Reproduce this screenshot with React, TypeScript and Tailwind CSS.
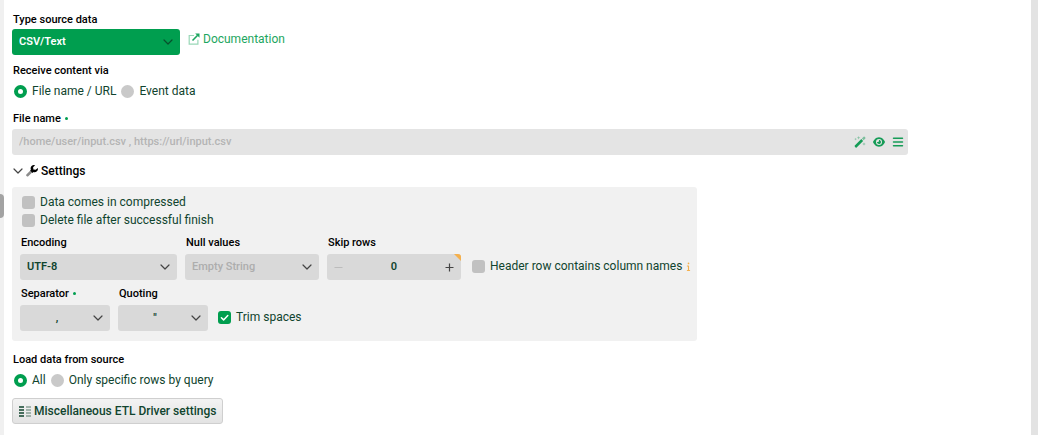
import type { ReactNode } from "react";
import { FaBars, FaEye, FaInfo } from "react-icons/fa6";
import clsx from "clsx";

function Chevron({ className }: { className?: string }) {
  return (
    <svg viewBox="0 0 10 6" className={clsx("pointer-events-none h-[6px] w-[10px]", className)} fill="none" stroke="currentColor" strokeWidth="1.2" strokeLinecap="round" strokeLinejoin="round">
      <path d="M1 1l4 4 4-4" />
    </svg>
  );
}

function Label({ htmlFor, required, children }: { htmlFor: string; required?: boolean; children: ReactNode }) {
  return (
    <label htmlFor={htmlFor} className="flex h-4 items-center pl-px text-[11px] leading-4 font-medium text-black">
      {children}
      {required && <span className="mb-px ml-1 size-[3px] rounded-full bg-[#009e4f]" />}
    </label>
  );
}

function Select({ id, options, className, arrow }: { id: string; options: string[]; className: string; arrow: string }) {
  return (
    <div className="relative">
      <select id={id} className={clsx("block h-[26px] w-full appearance-none rounded-[3px] text-[11px] outline-none", className)}>
        {options.map((option) => (
          <option key={option}>{option}</option>
        ))}
      </select>
      <Chevron className={clsx("absolute top-[10px]", arrow)} />
    </div>
  );
}

function Radio({ name, label, checked }: { name: string; label: string; checked?: boolean }) {
  return (
    <label className="flex items-center gap-[5px] text-[12px] leading-4">
      <input
        type="radio"
        name={name}
        defaultChecked={checked}
        className="size-[13px] appearance-none rounded-full bg-[#c9c9c9] checked:border-4 checked:border-[#009e4f] checked:bg-white"
      />
      {label}
    </label>
  );
}

function Checkbox({ label, checked }: { label: string; checked?: boolean }) {
  return (
    <label className="flex items-center gap-[5px] text-[12px] leading-[18px] whitespace-nowrap">
      <span className="relative flex">
        <input type="checkbox" defaultChecked={checked} className="peer size-[13px] appearance-none rounded-[3px] bg-[#c1c1c1] checked:bg-[#009e4f]" />
        <svg viewBox="0 0 13 13" className="pointer-events-none absolute inset-0 hidden peer-checked:block" fill="none" stroke="white" strokeWidth="1.5" strokeLinecap="round" strokeLinejoin="round">
          <path d="M3.4 6.7l2.2 2.2 4.2-4.4" />
        </svg>
      </span>
      {label}
    </label>
  );
}

function ExternalLinkIcon() {
  return (
    <svg viewBox="0 0 12 12" className="size-3" fill="none" stroke="currentColor">
      <path d="M6 2.5H1.2v8.7h8.7V6.8" strokeWidth="1.2" opacity="0.45" />
      <path d="M4.5 7.5l5.2-5.2" strokeWidth="1.6" />
      <path d="M7.2.5h4.3v4.3z" fill="currentColor" stroke="none" />
    </svg>
  );
}

function WandIcon() {
  return (
    <svg viewBox="0 0 12 12" className="size-3" fill="currentColor">
      <path d="M7.3 3.1l1.8 1.8-6.5 6.5a.7.7 0 0 1-1 0l-.8-.8a.7.7 0 0 1 0-1z" />
      <path d="M7.9 2.5L9.6.8a.7.7 0 0 1 1 0l.7.7a.7.7 0 0 1 0 1L9.7 4.3z" opacity="0.5" />
      <g opacity="0.45">
        <path d="M4.6 0l.5 1.2 1.2.5-1.2.5-.5 1.2-.5-1.2-1.2-.5 1.2-.5z" />
        <path d="M1.6 1.7l.4 1 1 .4-1 .4-.4 1-.4-1-1-.4 1-.4z" />
        <path d="M10 6.2l.5 1.3 1.3.5-1.3.5-.5 1.3-.5-1.3-1.3-.5 1.3-.5z" />
      </g>
    </svg>
  );
}

function WrenchIcon() {
  return (
    <svg viewBox="0 0 12 12" className="size-3">
      <path d="M4.600 5.200L.6 9.200a1.300 1.300 0 0 0 0 1.900 1.300 1.300 0 0 0 1.900 0l4.200-4.100z" fill="#8c8c8c" />
      <path d="M11.800 2.900a3.400 3.400 0 0 1-4.300 4.200l-1 .8-2.300-2.300.7-.9A3.400 3.400 0 0 1 9.100.2L7.100 2.200l.3 2.300 2.300.3z" fill="#000" />
    </svg>
  );
}

function ColumnsIcon() {
  return (
    <svg viewBox="0 0 12 11" className="h-[11px] w-3" fill="none" stroke="currentColor" strokeWidth="1.4">
      <path d="M0 1h5M0 4h5M0 7h5M0 10h5" />
      <path d="M7 1h5M7 4h5M7 7h5M7 10h5" opacity="0.45" />
    </svg>
  );
}

export default function App() {
  return (
    <div className="flex min-h-screen bg-white font-[Roboto,sans-serif] text-[#10442e]">
      <div className="flex w-1 shrink-0 flex-col justify-center bg-[#f0f0f0]">
        <div className="mb-6 h-6 rounded-r-sm bg-[#a3a3a3]" />
      </div>

      <main className="min-w-0 flex-1 px-2 pt-3 pb-[10px]">
        <Label htmlFor="source-type">Type source data</Label>
        <div className="mt-px flex items-start gap-2">
          <div className="w-[168px]">
            <Select id="source-type" options={["CSV/Text", "JSON", "XML"]} className="bg-[#009e4f] pl-[7px] font-semibold text-white" arrow="right-[7px] text-[#07502c]" />
          </div>
          <a href="#documentation" className="flex items-center gap-[3px] pt-[2px] text-[12px] leading-4 text-[#1da660]">
            <ExternalLinkIcon />
            Documentation
          </a>
        </div>

        <fieldset className="mt-2">
          <legend className="h-4 pl-px text-[11px] leading-4 font-medium text-black">Receive content via</legend>
          <div className="mt-1 flex gap-[5px] pl-[2px]">
            <Radio name="receive" label="File name / URL" checked />
            <Radio name="receive" label="Event data" />
          </div>
        </fieldset>

        <div className="mt-3 max-w-4xl">
          <Label htmlFor="file-name" required>File name</Label>
          <div className="mt-[2px] flex h-[26px] items-center gap-[7px] rounded-[3px] bg-[#e4e4e4] pr-1 pl-[7px] text-[#169c57]">
            <input
              id="file-name"
              type="text"
              placeholder="/home/user/input.csv , https://url/input.csv"
              className="min-w-0 flex-1 bg-transparent text-[11px] text-[#10442e] outline-none placeholder:font-medium placeholder:text-[#b4b4b4]"
            />
            <button type="button" aria-label="Build file name"><WandIcon /></button>
            <button type="button" aria-label="Preview"><FaEye className="size-3" /></button>
            <button type="button" aria-label="Choose from list"><FaBars className="size-3" /></button>
          </div>
        </div>

        <button type="button" aria-expanded="true" className="mt-2 flex h-4 items-center gap-[3px] pl-px text-[12px] leading-4 font-medium text-black">
          <Chevron className="text-[#444]" />
          <WrenchIcon />
          Settings
        </button>

        <section className="mt-2 max-w-[685px] rounded-[3px] bg-[#f1f1f1] pt-[6px] pr-1 pb-[10px] pl-2">
          <div className="flex flex-col items-start pl-[2px]">
            <Checkbox label="Data comes in compressed" />
            <Checkbox label="Delete file after successful finish" />
          </div>

          <div className="mt-[6px] flex items-end gap-2">
            <div className="w-[157px] shrink-0">
              <Label htmlFor="encoding">Encoding</Label>
              <div className="mt-[3px]">
                <Select id="encoding" options={["UTF-8", "UTF-16", "ISO-8859-1"]} className="bg-[#d9d9d9] pl-[7px] font-semibold" arrow="right-[7px] text-[#444]" />
              </div>
            </div>
            <div className="w-[134px] shrink-0">
              <Label htmlFor="null-values">Null values</Label>
              <div className="mt-[3px]">
                <Select id="null-values" options={["Empty String", "NULL"]} className="bg-[#d9d9d9] pl-[7px] font-medium text-[#adadad]" arrow="right-[7px] text-[#444]" />
              </div>
            </div>
            <div className="w-[134px] shrink-0">
              <Label htmlFor="skip-rows">Skip rows</Label>
              <div className="relative mt-[3px] flex h-[26px] items-center overflow-hidden rounded-[3px] bg-[#d9d9d9] px-[7px]">
                <button type="button" aria-label="Decrease" className="text-[#bcbcbc]">
                  <svg viewBox="0 0 9 9" className="size-[9px]" stroke="currentColor" strokeWidth="1.2"><path d="M.5 4.500h8" /></svg>
                </button>
                <input id="skip-rows" type="text" inputMode="numeric" defaultValue="0" className="min-w-0 flex-1 bg-transparent text-center text-[11px] font-semibold outline-none" />
                <button type="button" aria-label="Increase" className="text-[#444]">
                  <svg viewBox="0 0 9 9" className="size-[9px]" stroke="currentColor" strokeWidth="1.2"><path d="M.5 4.500h8M4.500.5v8" /></svg>
                </button>
                <svg viewBox="0 0 7 7" className="absolute top-0 right-0 size-[7px] text-[#f5b04c]" fill="currentColor"><path d="M0 0h7v7z" /></svg>
              </div>
            </div>
            <div className="flex h-[26px] items-center gap-1 pb-[2px] pl-[3px]">
              <Checkbox label="Header row contains column names" />
              <FaInfo className="h-[9px] w-[5px] shrink-0 text-[#f5b04c]" />
            </div>
          </div>

          <div className="mt-[6px] flex flex-wrap items-end gap-2">
            <div className="w-[90px]">
              <Label htmlFor="separator" required>Separator</Label>
              <div className="mt-[3px]">
                <Select id="separator" options={[",", ";", "|"]} className="bg-[#d9d9d9] pr-4 font-semibold [text-align-last:center]" arrow="right-[7px] text-[#444]" />
              </div>
            </div>
            <div className="w-[90px]">
              <Label htmlFor="quoting">Quoting</Label>
              <div className="mt-[3px]">
                <Select id="quoting" options={['"', "'"]} className="bg-[#d9d9d9] pr-4 font-semibold [text-align-last:center]" arrow="right-[7px] text-[#444]" />
              </div>
            </div>
            <div className="flex h-[26px] items-center pb-[2px] pl-[2px]">
              <Checkbox label="Trim spaces" checked />
            </div>
          </div>
        </section>

        <fieldset className="mt-[11px]">
          <legend className="h-4 pl-px text-[11px] leading-4 font-medium text-black">Load data from source</legend>
          <div className="mt-1 flex gap-[5px] pl-[2px]">
            <Radio name="load" label="All" checked />
            <Radio name="load" label="Only specific rows by query" />
          </div>
        </fieldset>

        <button type="button" className="mt-[10px] flex h-[26px] items-center gap-[3px] rounded-[3px] border border-[#cfcfcf] bg-linear-to-b from-[#f3f3f3] to-[#e3e3e3] px-[6px] text-[12px] font-medium">
          <ColumnsIcon />
          Miscellaneous ETL Driver settings
        </button>
      </main>

      <div className="w-[7px] shrink-0 bg-[#e3e3e3]" />
    </div>
  );
}
